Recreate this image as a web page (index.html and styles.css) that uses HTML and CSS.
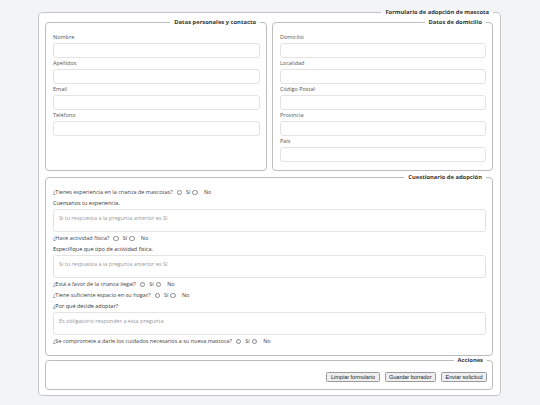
FILE: index.html
```html
<!DOCTYPE html>
<html lang="es">
<head>
<meta charset="utf-8">
<title>Formulario de adopción de mascota</title>
<link rel="stylesheet" href="styles.css">
</head>
<body>
<form class="form">
  <fieldset class="box box-outer">
    <legend class="legend">Formulario de adopción de mascota</legend>
    <div class="top-grid">
      <fieldset class="box box-inner">
        <legend class="legend">Datos personales y contacto</legend>
        <div class="field"><label class="label">Nombre</label><input class="input" type="text"></div>
        <div class="field"><label class="label">Apellidos</label><input class="input" type="text"></div>
        <div class="field"><label class="label">Email</label><input class="input" type="text"></div>
        <div class="field"><label class="label">Teléfono</label><input class="input" type="text"></div>
      </fieldset>
      <fieldset class="box box-inner">
        <legend class="legend">Datos de domicilio</legend>
        <div class="field"><label class="label">Domicilio</label><input class="input" type="text"></div>
        <div class="field"><label class="label">Localidad</label><input class="input" type="text"></div>
        <div class="field"><label class="label">Código Postal</label><input class="input" type="text"></div>
        <div class="field"><label class="label">Provincia</label><input class="input" type="text"></div>
        <div class="field"><label class="label">País</label><input class="input" type="text"></div>
      </fieldset>
    </div>
    <fieldset class="box box-quiz">
      <legend class="legend">Cuestionario de adopción</legend>
      <div class="q"><span>¿Tienes experiencia en la crianza de mascotas?</span><input type="radio" name="q1" class="radio r1"><span>Sí</span><input type="radio" name="q1" class="radio r2"><span>No</span></div>
      <div class="sub">Cuentanos tu experiencia.</div>
      <textarea class="area" placeholder="Si tu respuesta a la pregunta anterior es SI"></textarea>
      <div class="q"><span>¿Hace actividad física?</span><input type="radio" name="q2" class="radio r1"><span>Sí</span><input type="radio" name="q2" class="radio r2"><span>No</span></div>
      <div class="sub">Especifique que tipo de actividad física.</div>
      <textarea class="area" placeholder="Si tu respuesta a la pregunta anterior es SI"></textarea>
      <div class="q"><span>¿Está a favor de la crianza ilegal?</span><input type="radio" name="q3" class="radio r1"><span>Sí</span><input type="radio" name="q3" class="radio r2"><span>No</span></div>
      <div class="q"><span>¿Tiene suficiente espacio en su hogar?</span><input type="radio" name="q4" class="radio r1"><span>Sí</span><input type="radio" name="q4" class="radio r2"><span>No</span></div>
      <div class="sub">¿Por qué decide adoptar?</div>
      <textarea class="area" placeholder="Es obligatorio responder a esta pregunta"></textarea>
      <div class="q"><span>¿Se compromete a darle los cuidados necesarios a su nueva mastoca?</span><input type="radio" name="q5" class="radio r1"><span>Sí</span><input type="radio" name="q5" class="radio r2"><span>No</span></div>
    </fieldset>
    <fieldset class="box box-actions">
      <legend class="legend">Acciones</legend>
      <div class="buttons">
        <button type="button" class="btn">Limpiar formulario</button>
        <button type="button" class="btn">Guardar borrador</button>
        <button type="button" class="btn">Enviar solicitud</button>
      </div>
    </fieldset>
  </fieldset>
</form>
</body>
</html>
```

FILE: styles.css
```css
html, body {
  margin: 0;
  padding: 0;
  background: #f3f4f6;
  font-family: "Open Sans", "Noto Sans", sans-serif;
  font-size: 5.5px;
  color: #444;
}

.form {
  display: block;
  margin: 0;
  padding: 8px 0 0 38px;
}

.box {
  box-sizing: border-box;
  min-width: 0;
  margin: 0;
  border: 1px solid #bdbdbd;
  border-radius: 4px;
  background: #fff;
}

.box-outer {
  width: 463px;
  padding: 2px 7px 5px 6px;
  border-color: #c6c6c6;
}

.legend {
  margin-left: auto;
  margin-right: 0;
  padding: 0 4px;
  font-weight: 700;
  font-size: 5.8px;
  line-height: 8px;
  color: #333;
}

.top-grid {
  display: grid;
  grid-template-columns: 222px 221px;
  column-gap: 5px;
}

.box-inner {
  padding: 6px 6px 8px 7px;
}

.field {
  display: flex;
  flex-direction: column;
}

.label {
  display: block;
  line-height: 11px;
  color: #555;
}

.input {
  display: block;
  box-sizing: border-box;
  width: 100%;
  height: 15px;
  margin: 0;
  border: 1px solid #e3e3e3;
  border-radius: 3px;
  background: #fff;
  outline: none;
}

.box-quiz {
  margin-top: 2px;
  padding: 6px 6px 8px 7px;
}

.q {
  display: flex;
  align-items: center;
  height: 11px;
  line-height: 11px;
  color: #444;
}

.sub {
  line-height: 10px;
  color: #333;
}

.radio {
  appearance: none;
  -webkit-appearance: none;
  box-sizing: border-box;
  width: 5.5px;
  height: 5.5px;
  border: 0.8px solid #8a8a8a;
  border-radius: 50%;
  background: #fff;
  padding: 0;
}

.r1 {
  margin: 0 4px 0 4px;
}

.r2 {
  margin: 0 6px 0 2px;
}

.area {
  display: block;
  box-sizing: border-box;
  width: 100%;
  height: 23px;
  margin: 1px 0;
  padding: 4px 5px;
  border: 1px solid #e3e3e3;
  border-radius: 3px;
  font-family: "Open Sans", "Noto Sans", sans-serif;
  font-size: 5.5px;
  line-height: 8px;
  resize: none;
  outline: none;
}

.area::placeholder {
  color: #999;
}

.box-actions {
  padding: 8px 5px 7px 7px;
}

.buttons {
  display: flex;
  justify-content: flex-end;
  gap: 5px;
}

.btn {
  box-sizing: border-box;
  height: 10px;
  margin: 0;
  padding: 0 3.5px;
  border: 1px solid #9a9a9a;
  border-radius: 1.5px;
  background: #efefef;
  font-family: "Liberation Sans", Arial, sans-serif;
  font-size: 5.5px;
  line-height: 8px;
  color: #222;
}
```
